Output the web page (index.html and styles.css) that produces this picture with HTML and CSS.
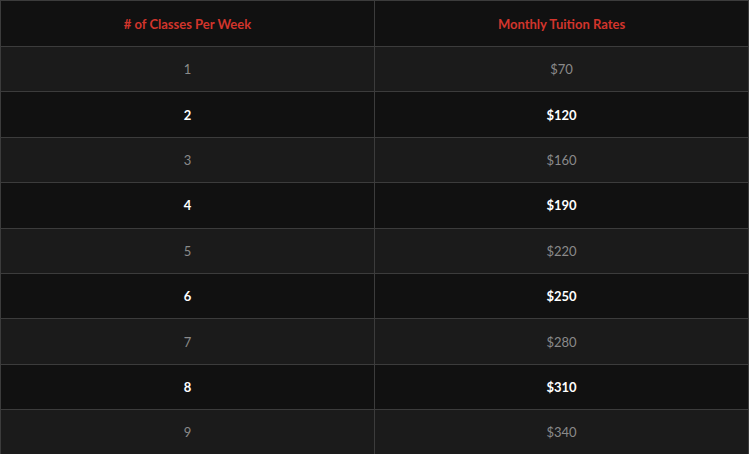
FILE: index.html
```html
<!DOCTYPE html>
<html>
<head>
<meta charset="utf-8">
<link rel="stylesheet" href="styles.css">
</head>
<body>
<table class="rates">
  <thead>
    <tr class="head"><th># of Classes Per Week</th><th>Monthly Tuition Rates</th></tr>
  </thead>
  <tbody>
    <tr class="odd"><td>1</td><td>$70</td></tr>
    <tr class="even"><td>2</td><td>$120</td></tr>
    <tr class="odd"><td>3</td><td>$160</td></tr>
    <tr class="even"><td>4</td><td>$190</td></tr>
    <tr class="odd"><td>5</td><td>$220</td></tr>
    <tr class="even"><td>6</td><td>$250</td></tr>
    <tr class="odd"><td>7</td><td>$280</td></tr>
    <tr class="even"><td>8</td><td>$310</td></tr>
    <tr class="odd"><td>9</td><td>$340</td></tr>
  </tbody>
</table>
</body>
</html>
```

FILE: styles.css
```css
html, body {
  margin: 0;
  padding: 0;
  background: #111111;
}
.rates {
  width: 749px;
  border-collapse: collapse;
  table-layout: fixed;
  font-family: Lato, "Open Sans", sans-serif;
  font-size: 13px;
}
.rates th, .rates td {
  border: 1px solid #3c3c3c;
  text-align: center;
  vertical-align: middle;
  padding: 0 8px;
}
.rates th {
  height: 45px;
  color: #d2352c;
  font-weight: 700;
  background: #111111;
}
.rates td {
  height: 44.4px;
}
.odd td {
  background: #1b1b1b;
  color: #8a8a8a;
  font-weight: 400;
}
.even td {
  background: #111111;
  color: #ffffff;
  font-weight: 700;
}
```
